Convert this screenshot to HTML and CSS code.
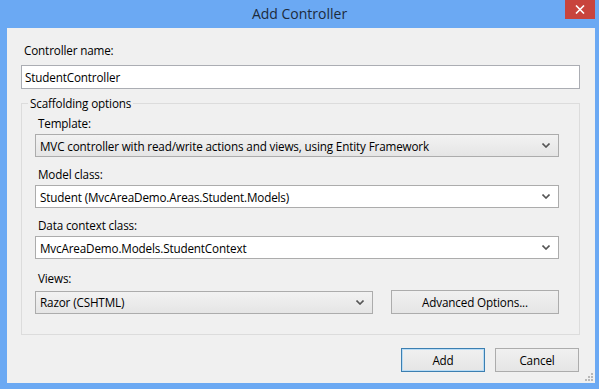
FILE: index.html
```html
<!DOCTYPE html>
<html lang="en">
<head>
  <meta charset="UTF-8" />
  <title>Add Controller</title>
  <link rel="stylesheet" href="styles.css">
</head>
<body>
  <div class="window">
    <div class="titlebar">
      <span></span>
      <span class="title">Add Controller</span>
      <span class="close">
        <svg width="10" height="9" viewBox="0 0 10 9"><path d="M1 0.5 L9 8.5 M9 0.5 L1 8.5" stroke="#fff" stroke-width="1.6"/></svg>
      </span>
    </div>

    <div class="client">
      <div class="label top-label">Controller name:</div>
      <div class="textbox">StudentController</div>

      <fieldset class="group">
        <legend>Scaffolding options</legend>

        <div class="row">
          <div class="label">Template:</div>
          <div class="combo gray">
            <span>MVC controller with read/write actions and views, using Entity Framework</span>
            <svg class="chev" width="8" height="5" viewBox="0 0 8 5"><path d="M0.5 0.5 L4 4 L7.5 0.5" fill="none" stroke="#555" stroke-width="1.6"/></svg>
          </div>
        </div>

        <div class="row">
          <div class="label">Model class:</div>
          <div class="combo">
            <span>Student (MvcAreaDemo.Areas.Student.Models)</span>
            <svg class="chev" width="8" height="5" viewBox="0 0 8 5"><path d="M0.5 0.5 L4 4 L7.5 0.5" fill="none" stroke="#555" stroke-width="1.6"/></svg>
          </div>
        </div>

        <div class="row">
          <div class="label">Data context class:</div>
          <div class="combo">
            <span>MvcAreaDemo.Models.StudentContext</span>
            <svg class="chev" width="8" height="5" viewBox="0 0 8 5"><path d="M0.5 0.5 L4 4 L7.5 0.5" fill="none" stroke="#555" stroke-width="1.6"/></svg>
          </div>
        </div>

        <div class="row last">
          <div class="label">Views:</div>
          <div class="views-line">
            <div class="combo gray views">
              <span>Razor (CSHTML)</span>
              <svg class="chev" width="8" height="5" viewBox="0 0 8 5"><path d="M0.5 0.5 L4 4 L7.5 0.5" fill="none" stroke="#555" stroke-width="1.6"/></svg>
            </div>
            <div class="btn advanced">Advanced Options...</div>
          </div>
        </div>
      </fieldset>

      <div class="actions">
        <div class="btn default">Add</div>
        <div class="btn">Cancel</div>
      </div>

      <svg class="grip" width="8" height="8" viewBox="0 0 8 8">
        <rect x="6" y="0" width="2" height="2" fill="#b8b8b8"/>
        <rect x="3" y="3" width="2" height="2" fill="#b8b8b8"/>
        <rect x="6" y="3" width="2" height="2" fill="#b8b8b8"/>
        <rect x="0" y="6" width="2" height="2" fill="#b8b8b8"/>
        <rect x="3" y="6" width="2" height="2" fill="#b8b8b8"/>
        <rect x="6" y="6" width="2" height="2" fill="#b8b8b8"/>
      </svg>
    </div>
  </div>
</body>
</html>
```

FILE: styles.css
```css
body {
  margin: 0;
  background: #6ba9f3;
  font-family: "Open Sans", "Noto Sans", sans-serif;
  font-size: 11.7px;
  letter-spacing: -0.15px;
  color: #000;
}

.window {
  width: 599px;
  height: 389px;
  display: flex;
  flex-direction: column;
}

.titlebar {
  height: 28px;
  display: grid;
  grid-template-columns: 1fr auto 1fr;
}

.title {
  align-self: center;
  font-size: 14px;
  letter-spacing: 0;
  color: #1d2b3b;
  margin-top: -1px;
}

.close {
  justify-self: end;
  width: 30px;
  height: 19px;
  margin-right: 4px;
  background: #c8443d;
  display: flex;
  align-items: center;
  justify-content: center;
}

.client {
  flex: 1;
  margin: 0 4px 6px 7px;
  background: #f0f0f0;
  padding: 14px 15px 0 14px;
  position: relative;
}

.label {
  height: 16px;
  line-height: 16px;
  padding-left: 3px;
}

.textbox {
  margin-top: 7px;
  height: 22px;
  line-height: 22px;
  border: 1px solid #abadb3;
  background: #fff;
  padding-left: 3px;
}

.group {
  margin: 6px 0 0;
  border: 1px solid #dcdcdc;
  padding: 4px 20px 20px 13px;
}

.group legend {
  padding: 0 2px;
  margin-left: -7px;
  height: 16px;
  line-height: 16px;
}

.row {
  margin-bottom: 9px;
}

.row.last {
  margin-bottom: 0;
  margin-top: 11px;
}

.row.last .label {
  margin-bottom: 4px;
}

.combo {
  margin-top: 3px;
  height: 21px;
  border: 1px solid #acacac;
  background: #fff;
  display: flex;
  align-items: center;
  justify-content: space-between;
  padding: 0 8px 0 4px;
}

.combo.gray {
  background: linear-gradient(#f2f2f2, #e5e5e5);
}

.chev {
  display: block;
}

.views-line {
  display: flex;
  align-items: center;
  justify-content: space-between;
}

.views-line .combo {
  margin-top: 0;
  width: 324px;
}

.btn {
  height: 22px;
  line-height: 22px;
  border: 1px solid #acacac;
  background: linear-gradient(#f0f0f0, #e5e5e5);
  text-align: center;
}

.btn.advanced {
  width: 166px;
}

.actions {
  display: flex;
  justify-content: flex-end;
  gap: 10px;
  margin-top: 13px;
  margin-right: 1px;
}

.actions .btn {
  width: 82px;
}

.btn.default {
  border-color: #3c7fb1;
  box-shadow: inset 0 0 0 1px #b9dcf5;
}

.grip {
  position: absolute;
  right: 2px;
  bottom: 2px;
}
```
